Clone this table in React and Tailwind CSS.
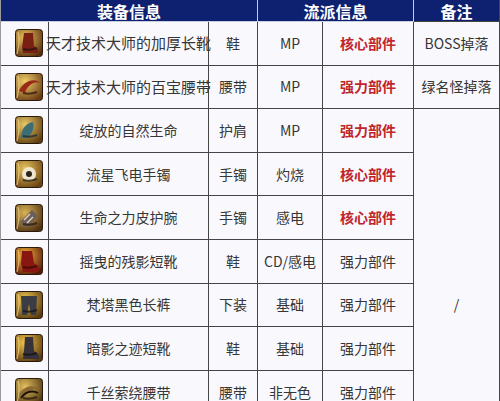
const rows = [
  { icon: 0, name: '天才技术大师的加厚长靴', big: true, slot: '鞋', tag: 'MP', part: '核心部件', hot: true, note: 'BOSS掉落' },
  { icon: 1, name: '天才技术大师的百宝腰带', big: true, slot: '腰带', tag: 'MP', part: '强力部件', hot: true, note: '绿名怪掉落' },
  { icon: 2, name: '绽放的自然生命', slot: '护肩', tag: 'MP', part: '强力部件', hot: true },
  { icon: 3, name: '流星飞电手镯', slot: '手镯', tag: '灼烧', part: '核心部件', hot: true },
  { icon: 4, name: '生命之力皮护腕', slot: '手镯', tag: '感电', part: '核心部件', hot: true },
  { icon: 5, name: '摇曳的残影短靴', slot: '鞋', tag: 'CD/感电', part: '强力部件' },
  { icon: 6, name: '梵塔黑色长裤', slot: '下装', tag: '基础', part: '强力部件' },
  { icon: 7, name: '暗影之迹短靴', slot: '鞋', tag: '基础', part: '强力部件' },
  { icon: 8, name: '千丝萦绕腰带', slot: '腰带', tag: '非无色', part: '强力部件' },
  { icon: 1, name: '天才技术大师的腰带', slot: '腰带', tag: '基础', part: '强力部件' },
  { icon: 6, name: '暗影之迹长裤', slot: '下装', tag: '基础', part: '强力部件' },
]

const palettes = [
  { bg: ['#e9c25a', '#5a2e10'], fg: '#7a1f14', fg2: '#2a1410' },
  { bg: ['#f0cf6a', '#6a3a12'], fg: '#9a2a18', fg2: '#3a1a10' },
  { bg: ['#e8c865', '#5e3c12'], fg: '#3e6e74', fg2: '#1f2f36' },
  { bg: ['#e6c35c', '#6a4212'], fg: '#f0e6cf', fg2: '#2b2219' },
  { bg: ['#d8b254', '#4e3012'], fg: '#6e5e58', fg2: '#2a1c16' },
  { bg: ['#f2b43a', '#5a180a'], fg: '#8a1612', fg2: '#3a0a08' },
  { bg: ['#f0c650', '#5a3a10'], fg: '#3c3c44', fg2: '#15151a' },
  { bg: ['#f2c44a', '#5a3810'], fg: '#35323a', fg2: '#141216' },
  { bg: ['#e2bf5c', '#4a3010'], fg: '#8a6a30', fg2: '#2a1c0c' },
]

function ItemIcon({ index }) {
  const p = palettes[index]
  const id = `ig${index}`
  const shapes = [
    <path key="s" d="M9 4h9l1 13 4 3v4H8l-1-6z" fill={p.fg} />,
    <path key="s" d="M4 18c4-10 16-14 21-8-3-2-12 0-15 10z" fill={p.fg} />,
    <path key="s" d="M6 22c0-9 5-15 12-16 2 6-1 12-6 16z" fill={p.fg} />,
    <circle key="s" cx="14" cy="14" r="7" fill={p.fg} />,
    <path key="s" d="M5 18l12-12 6 6-12 12z" fill={p.fg} />,
    <path key="s" d="M7 4h10l2 12 5 4-1 5H8l-2-8z" fill={p.fg} />,
    <path key="s" d="M6 5h16l-1 19h-5l-2-11-2 11H7z" fill={p.fg} />,
    <path key="s" d="M10 3h8l1 14 5 4v4H8l1-8z" fill={p.fg} />,
    <path key="s" d="M4 16c6-9 16-10 21-4-6-2-13 0-18 8z" fill={p.fg} />,
  ]
  return (
    <svg width="28" height="28" viewBox="0 0 28 28" className="block">
      <defs>
        <radialGradient id={id} cx="35%" cy="30%" r="80%">
          <stop offset="0%" stopColor={p.bg[0]} />
          <stop offset="100%" stopColor={p.bg[1]} />
        </radialGradient>
      </defs>
      <rect x="0.5" y="0.5" width="27" height="27" rx="3" fill={`url(#${id})`} stroke="#2a1a0e" />
      <path d="M3 3c2 6 1 14-1 22" stroke="#fbe6a0" strokeWidth="1.2" fill="none" opacity="0.6" />
      {shapes[index]}
      <path d="M8 20c4 1 9 1 14-1" stroke={p.fg2} strokeWidth="2" fill="none" opacity="0.8" />
      {index === 3 && <circle cx="14" cy="14" r="3" fill={p.fg2} />}
      {index === 4 && <path d="M9 16l6-6M12 19l6-6" stroke="#d8ccc0" strokeWidth="1.5" />}
      {index === 8 && <path d="M6 20c5-7 12-8 17-5" stroke="#1a1208" strokeWidth="2" fill="none" />}
    </svg>
  )
}

const cell = 'flex items-center justify-center border-r border-b border-[#454545] text-[14px] text-[#363636]'

export default function App() {
  return (
    <div
      className="h-[401px] w-[500px] overflow-hidden bg-[#f9f9fd]"
      style={{ fontFamily: '"Noto Sans CJK SC", "Microsoft YaHei", sans-serif' }}
    >
      <div className="grid w-[499px] grid-cols-[48px_160px_49px_65px_91px_86px] grid-rows-[22px_repeat(11,43.6px)] border-l border-[#9a9a9a]">
        <div className="col-span-3 flex items-center justify-center border-r border-b border-[#c9cde0] bg-[#0e2170] text-[16px] font-bold leading-none text-white">
          装备信息
        </div>
        <div className="col-span-2 flex items-center justify-center border-r border-b border-[#c9cde0] bg-[#0e2170] text-[16px] font-bold leading-none text-white">
          流派信息
        </div>
        <div className="flex items-center justify-center border-r border-b border-[#454545] bg-[#0e2170] text-[16px] font-bold leading-none text-white">
          备注
        </div>

        {rows.map((r, i) => (
          <Row key={i} r={r} i={i} />
        ))}
      </div>
    </div>
  )
}

function Row({ r, i }) {
  return (
    <>
      <div className={`${cell} pl-[8px]`}>
        <ItemIcon index={r.icon} />
      </div>
      <div className={`${cell} whitespace-nowrap ${r.big ? 'text-[15px]' : ''}`}>{r.name}</div>
      <div className={cell}>{r.slot}</div>
      <div className={cell}>{r.tag}</div>
      <div className={`${cell} ${r.hot ? 'font-bold text-[#c0252c]' : ''}`}>{r.part}</div>
      {i < 2 && <div className={cell}>{r.note}</div>}
      {i === 2 && <div className={`${cell} row-span-9`}>/</div>}
    </>
  )
}
